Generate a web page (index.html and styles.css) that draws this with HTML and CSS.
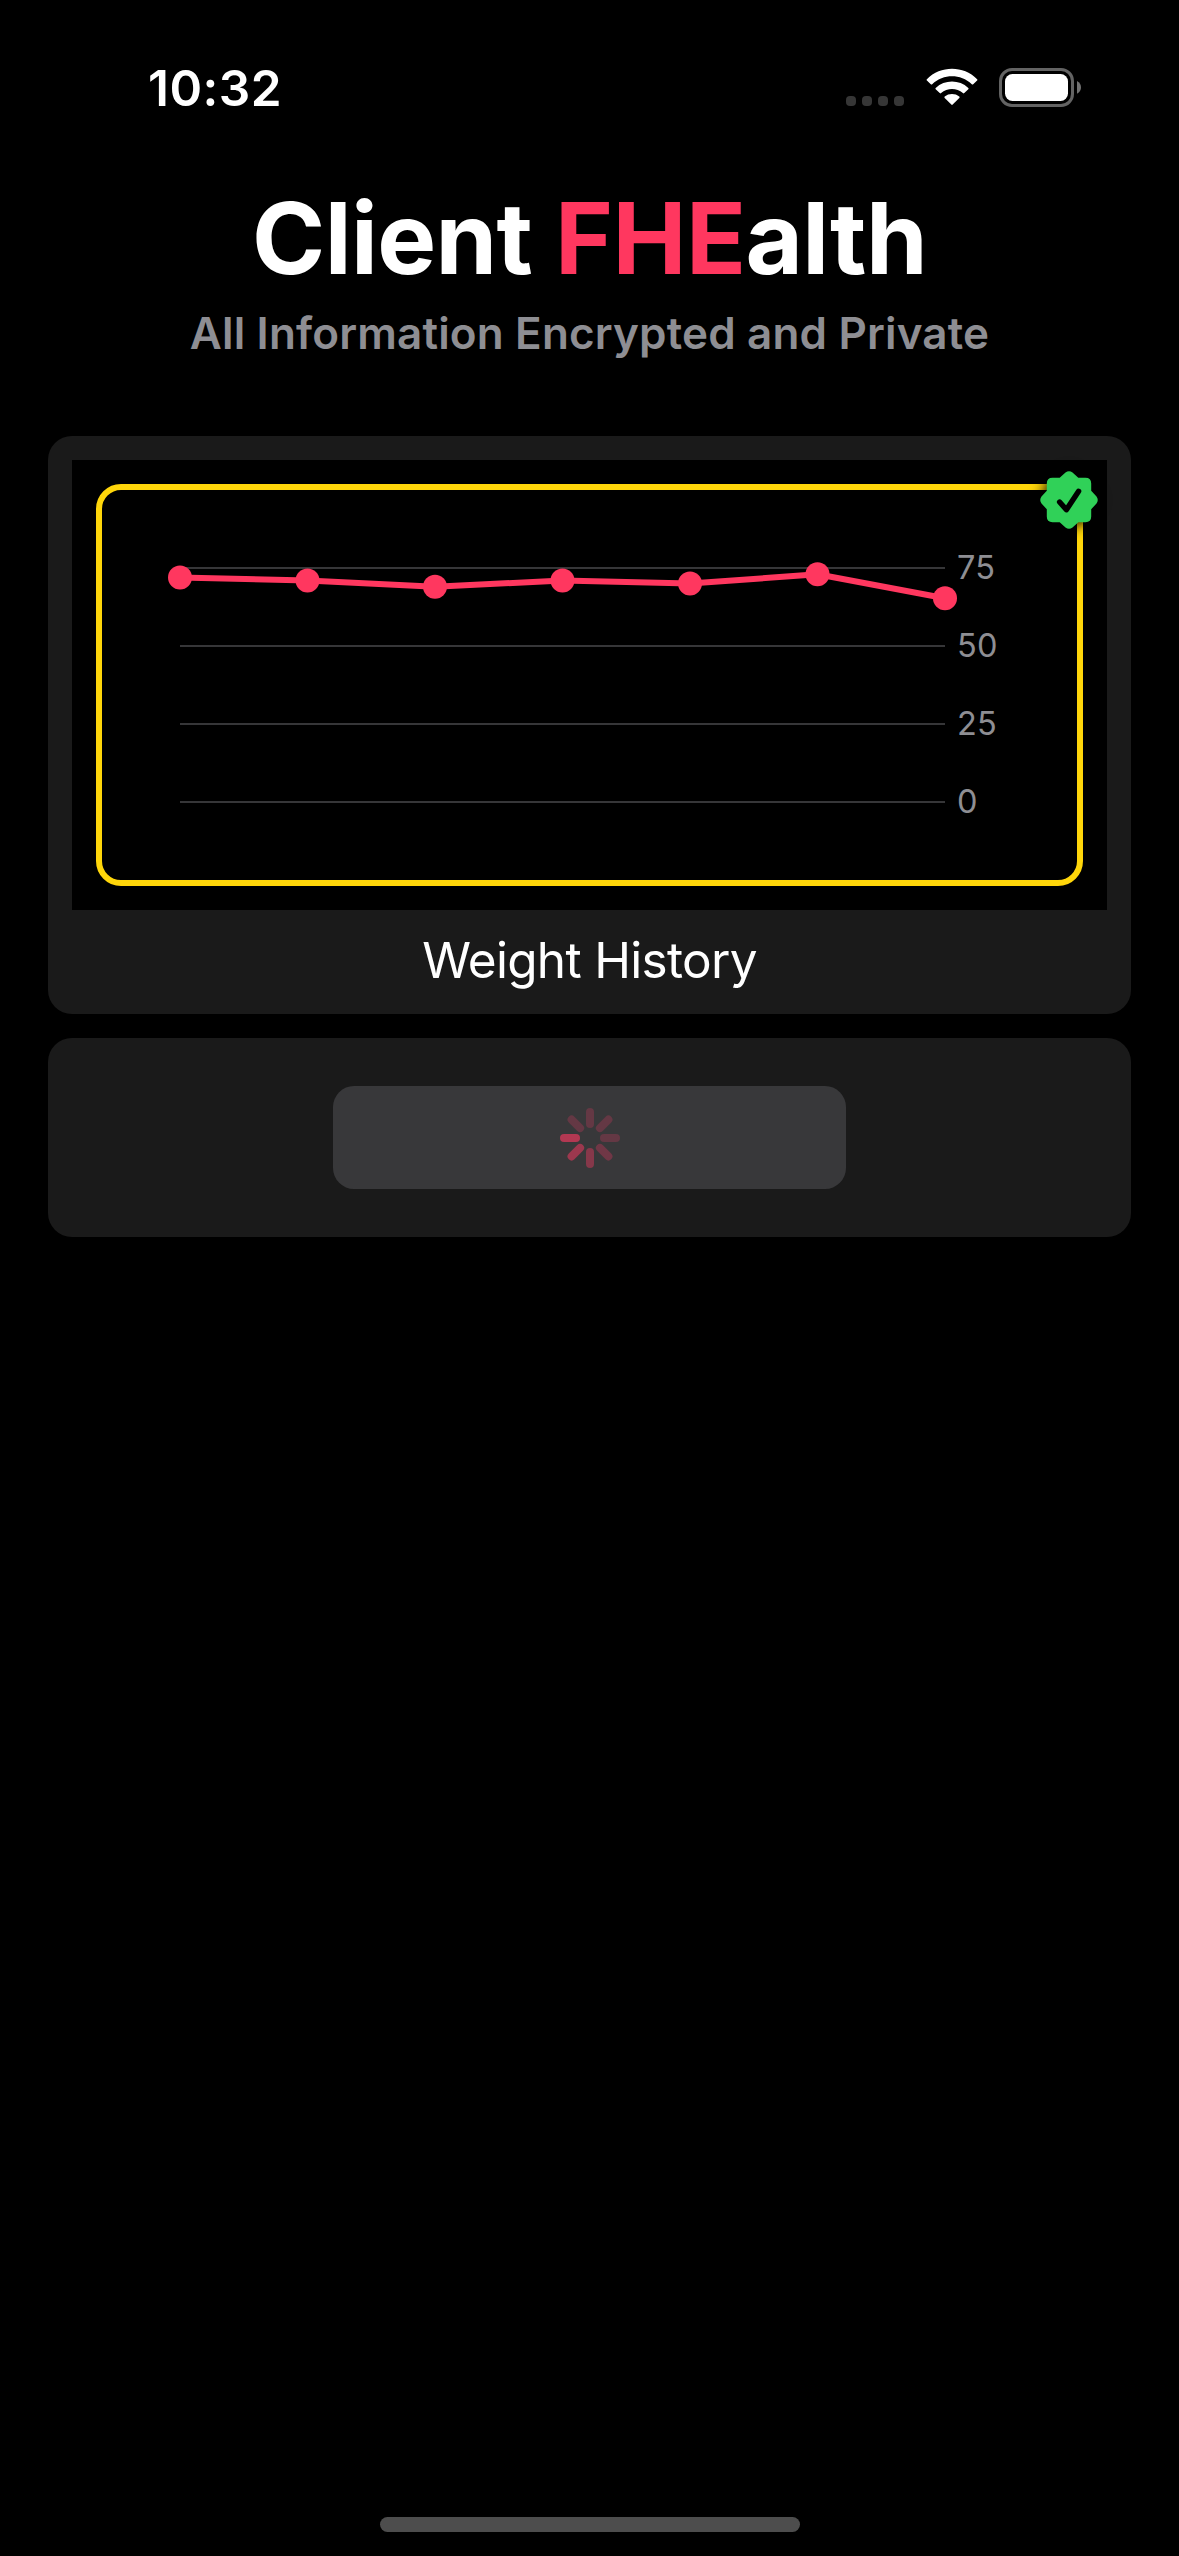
FILE: index.html
```html
<!DOCTYPE html>
<html lang="en">
<head>
<meta charset="utf-8">
<title>Client FHEalth</title>
<link rel="stylesheet" href="styles.css">
</head>
<body>
<div class="screen">
  <header class="status-bar">
    <span class="time">10:32</span>
    <div class="indicators">
      <div class="signal"><i></i><i></i><i></i><i></i></div>
      <svg class="wifi" width="52" height="39" viewBox="0 0 52 39" fill="#fff">
        <path d="M.9 11.2C14.600-2.700 37.400-2.700 51.100 11.200Q51.700 11.900 51.100 12.500L47.200 16.300Q46.500 16.900 45.800 16.300C34.500 5.700 17.500 5.700 6.200 16.300Q5.500 16.900 4.800 16.300L.9 12.500Q.3 11.900.9 11.200Z"/>
        <path d="M9.700 19.900C18.700 11.400 33.300 11.400 42.300 19.900Q43 20.600 42.300 21.300L38.300 25.100Q37.600 25.700 36.900 25.100C30.700 19.700 21.300 19.700 15.100 25.100Q14.400 25.700 13.700 25.100L9.700 21.300Q9 20.600 9.700 19.900Z"/>
        <path d="M18.700 28.500C22.900 25.200 29.100 25.200 33.300 28.500Q34 29.100 33.300 29.900L26.700 36.600Q26 37.300 25.300 36.600L18.700 29.900Q18 29.100 18.700 28.500Z"/>
      </svg>
      <svg class="battery" width="82" height="39" viewBox="0 0 82 39">
        <rect x="1.500" y="1.500" width="72" height="36" rx="11.500" fill="none" stroke="#636363" stroke-width="3"/>
        <rect x="6" y="6" width="63" height="27" rx="7.500" fill="#fff"/>
        <path d="M78 13C80.700 14.200 82 16.800 82 19.300S80.700 24.500 78 25.700Z" fill="#727272"/>
      </svg>
    </div>
  </header>

  <main class="content">
    <h1 class="title">Client <span class="accent">FHE</span>alth</h1>
    <p class="subtitle">All Information Encrypted and Private</p>

    <section class="card history">
      <div class="chart-area">
        <div class="chart-frame">
          <svg class="chart" width="975" height="390" viewBox="102 490 975 390">
            <path d="M180 568H945M180 646H945M180 724H945M180 802H945" stroke="#363638" stroke-width="2"/>
            <polyline points="180,577.400 307.500,580.500 435,586.700 562.500,580.500 690,583.600 817.500,574.200 945,598.200" fill="none" stroke="#ff375f" stroke-width="6" stroke-linejoin="round"/>
            <g fill="#ff375f">
              <circle cx="180" cy="577.400" r="12"/>
              <circle cx="307.500" cy="580.500" r="12"/>
              <circle cx="435" cy="586.700" r="12"/>
              <circle cx="562.500" cy="580.500" r="12"/>
              <circle cx="690" cy="583.600" r="12"/>
              <circle cx="817.500" cy="574.200" r="12"/>
              <circle cx="945" cy="598.200" r="12"/>
            </g>
            <g class="axis">
              <text x="957" y="579">75</text>
              <text x="957" y="657">50</text>
              <text x="957" y="735">25</text>
              <text x="957" y="813">0</text>
            </g>
          </svg>
        </div>
        <svg class="badge" width="58" height="58" viewBox="-29 -29 58 58">
          <path d="M-3.500 -27.500Q0 -30 3.500 -27.500L9.300 -22.200H16.500Q22.200 -22.200 22.200 -16.500V-9.300L27.500 -3.500Q30 0 27.500 3.500L22.200 9.300V16.500Q22.200 22.200 16.500 22.200H9.300L3.500 27.500Q0 30 -3.500 27.500L-9.300 22.200H-16.500Q-22.200 22.200 -22.200 16.500V9.300L-27.500 3.500Q-30 0 -27.500 -3.500L-22.200 -9.300V-16.500Q-22.200 -22.200 -16.500 -22.200H-9.300Z" fill="#30d158"/>
          <path d="M-9.400 2L-2.600 9.700L9.600 -8.700" fill="none" stroke="#000" stroke-width="5.400" stroke-linecap="round" stroke-linejoin="round"/>
        </svg>
      </div>
      <h2 class="caption">Weight History</h2>
    </section>

    <section class="card action">
      <button class="button" aria-label="Loading">
        <svg width="60" height="60" viewBox="-30 -30 60 60" stroke-width="8" stroke-linecap="round">
          <path d="M0-14V-26" stroke="#643844"/>
          <path d="M9.900-9.900L18.400-18.400" stroke="#643844"/>
          <path d="M14 0H26" stroke="#643844"/>
          <path d="M9.900 9.900L18.400 18.400" stroke="#703746"/>
          <path d="M0 14V26" stroke="#86384a"/>
          <path d="M-9.900 9.900L-18.400 18.400" stroke="#9c384e"/>
          <path d="M-14 0H-26" stroke="#b23852"/>
          <path d="M-9.900-9.900L-18.400-18.400" stroke="#643844"/>
        </svg>
      </button>
    </section>
  </main>

  <div class="home-indicator"></div>
</div>
</body>
</html>
```

FILE: styles.css
```css
* {
  box-sizing: border-box;
}

body {
  margin: 0;
  background: #000;
  color: #fff;
  font-family: Inter, "Liberation Sans", sans-serif;
}

.screen {
  display: flex;
  flex-direction: column;
  width: 1179px;
  height: 2556px;
  padding-bottom: 24px;
  overflow: hidden;
}

.status-bar {
  display: flex;
  justify-content: space-between;
  height: 177px;
  padding: 68px 98px 0 148px;
}

.time {
  font-size: 49.5px;
  font-weight: 600;
  letter-spacing: 0.5px;
  line-height: 40px;
}

.indicators {
  display: flex;
  align-items: flex-start;
}

.signal {
  display: flex;
  gap: 6px;
  margin: 28px 22px 0 0;
}

.signal i {
  width: 10px;
  height: 10px;
  border-radius: 4px;
  background: #363636;
}

.wifi {
  margin-right: 21px;
}

.content {
  display: flex;
  flex: 1;
  flex-direction: column;
  padding: 0 48px;
}

.title,
.subtitle {
  margin: 0;
  text-align: center;
  white-space: nowrap;
}

.title {
  height: 122px;
  font-size: 99px;
  font-weight: 700;
  letter-spacing: -0.6px;
  line-height: 122px;
}

.accent {
  color: #ff375f;
}

.subtitle {
  height: 68px;
  margin-bottom: 69px;
  color: #8e8e93;
  font-size: 44px;
  font-weight: 600;
  letter-spacing: 0.16px;
  line-height: 68px;
}

.card {
  border-radius: 24px;
  background: #1a1a1a;
}

.history {
  height: 578px;
  margin-bottom: 24px;
  padding: 24px 24px 0;
}

.chart-area {
  position: relative;
  height: 450px;
  padding: 24px;
  background: #000;
}

.chart-frame {
  height: 402px;
  border: 6px solid #ffd60a;
  border-radius: 25px;
}

.chart {
  display: block;
}

.axis {
  fill: #8e8e93;
  font-size: 32.5px;
  letter-spacing: 0.2px;
}

.badge {
  position: absolute;
  top: 11px;
  right: 9px;
  overflow: visible;
  filter: drop-shadow(0 0 7px #000);
}

.caption {
  margin: 0;
  font-size: 49.5px;
  font-weight: 400;
  letter-spacing: -0.7px;
  line-height: 100px;
  text-align: center;
}

.action {
  display: flex;
  justify-content: center;
  padding: 48px;
}

.button {
  display: flex;
  align-items: center;
  justify-content: center;
  width: 513px;
  height: 103px;
  padding: 0;
  border: 0;
  border-radius: 21px;
  background: #38383a;
}

.home-indicator {
  align-self: center;
  width: 420px;
  height: 15px;
  margin-left: 1px;
  border-radius: 8px;
  background: #4d4d4d;
}
```
